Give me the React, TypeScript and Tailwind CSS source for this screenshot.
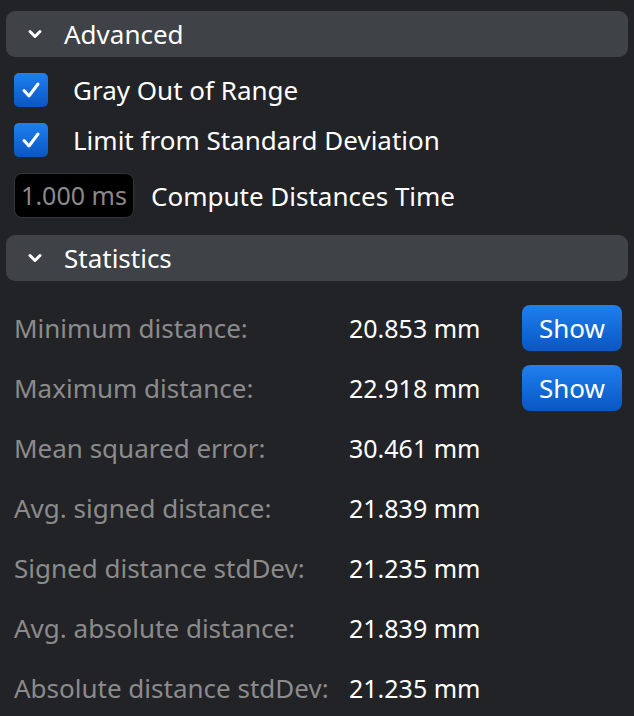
import React from "react";

const font = { fontFamily: '"Noto Sans", "Open Sans", sans-serif' };

const Chevron = () => (
  <svg width="16" height="16" viewBox="0 0 16 16" className="shrink-0">
    <path d="M3 5.5 L8 10.5 L13 5.5" fill="none" stroke="#ffffff" strokeWidth="3" strokeLinecap="round" strokeLinejoin="round" />
  </svg>
);

const Header = ({ title }: { title: string }) => (
  <div className="flex items-center h-[46px] mx-[6px] rounded-[9px] bg-[#3f4246] pl-[21px] gap-[21px]">
    <Chevron />
    <span className="text-[26px] text-white leading-none">{title}</span>
  </div>
);

const Check = ({ label }: { label: string }) => (
  <div className="flex items-center h-[34px] px-[14px] gap-[25px]">
    <div className="w-[34px] h-[34px] rounded-[5px] bg-gradient-to-b from-[#1f80ee] to-[#0a56c4] flex items-center justify-center">
      <svg width="22" height="22" viewBox="0 0 22 22">
        <path d="M4 11.5 L9 17 L18 5" fill="none" stroke="#ffffff" strokeWidth="3" strokeLinecap="round" strokeLinejoin="round" />
      </svg>
    </div>
    <span className="text-[26px] text-white leading-none">{label}</span>
  </div>
);

const stats: [string, string, boolean][] = [
  ["Minimum distance:", "20.853 mm", true],
  ["Maximum distance:", "22.918 mm", true],
  ["Mean squared error:", "30.461 mm", false],
  ["Avg. signed distance:", "21.839 mm", false],
  ["Signed distance stdDev:", "21.235 mm", false],
  ["Avg. absolute distance:", "21.839 mm", false],
  ["Absolute distance stdDev:", "21.235 mm", false],
];

export default function App() {
  return (
    <div style={font} className="w-[634px] h-[716px] overflow-hidden bg-[#222327] pt-[11px]">
      <Header title="Advanced" />

      <div className="flex flex-col gap-[16px] mt-[16px]">
        <Check label="Gray Out of Range" />
        <Check label="Limit from Standard Deviation" />
      </div>

      <div className="flex items-center px-[14px] mt-[16px] gap-[17px]">
        <div className="w-[120px] h-[45px] rounded-[8px] bg-black border border-[#333539] flex items-center justify-center text-[25px] text-[#8a8a8a] leading-none">
          1.000 ms
        </div>
        <span className="text-[26px] text-white leading-none">Compute Distances Time</span>
      </div>

      <div className="mt-[17px]">
        <Header title="Statistics" />
      </div>

      <div className="flex flex-col mt-[24px]">
        {stats.map(([label, value, btn]) => (
          <div key={label} className="flex items-center h-[46px] mb-[14px] pl-[14px]">
            <span className="w-[335px] text-[26px] text-[#8b8b8b] leading-none">{label}</span>
            <span className="w-[173px] text-[25px] text-white leading-none">{value}</span>
            {btn && (
              <div className="w-[100px] h-[46px] rounded-[8px] bg-gradient-to-b from-[#1f80ee] to-[#0a56c4] flex items-center justify-center text-[26px] text-white leading-none">
                Show
              </div>
            )}
          </div>
        ))}
      </div>
    </div>
  );
}
